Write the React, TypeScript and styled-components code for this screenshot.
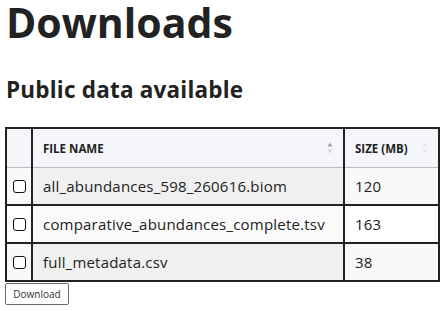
import React from 'react';
import styled, { createGlobalStyle } from 'styled-components';

const GlobalStyle = createGlobalStyle`
  body {
    margin: 0;
    background: #fff;
    color: #222;
    font-family: "Open Sans", "DejaVu Sans", sans-serif;
  }
`;

const Page = styled.div`
  padding: 0 4px 0 5px;
`;

const Title = styled.h1`
  margin: 0;
  padding-left: 1px;
  font-size: 41px;
  line-height: 44px;
  font-weight: 700;
  color: #222;
`;

const SubTitle = styled.h2`
  margin: 32px 0 23px 0;
  padding-left: 1px;
  font-size: 22.5px;
  line-height: 28px;
  font-weight: 700;
  letter-spacing: 0.2px;
  color: #222;
`;

const Table = styled.table`
  width: 100%;
  border-collapse: collapse;
  border: 2px solid #222;
  margin-bottom: 1px;
`;

const Th = styled.th<{ w?: number }>`
  height: 38px;
  padding: 0 10px;
  width: ${p => (p.w ? `${p.w}px` : 'auto')};
  background: #f5f6fa;
  border-left: 2px solid #222;
  border-right: 2px solid #222;
  border-bottom: 1px solid #bdbdbd;
  text-align: left;
  font-size: 11.5px;
  font-weight: 700;
  color: #222;
`;

const CheckHead = styled(Th)`
  padding: 0;
`;

const HeadInner = styled.div`
  display: flex;
  align-items: center;
  justify-content: space-between;
`;

const Row = styled.tr<{ odd: boolean }>`
  background: ${p => (p.odd ? '#f9f9f9' : '#ffffff')};
`;

const Td = styled.td<{ sorted?: boolean; odd?: boolean; first?: boolean }>`
  height: 36px;
  padding: 0 10px;
  border-left: 2px solid #222;
  border-right: 2px solid #222;
  border-top: ${p => (p.first ? 'none' : '2px solid #222')};
  font-size: 15px;
  letter-spacing: 0.2px;
  color: #222;
  background: ${p => (p.sorted ? (p.odd ? '#f0f0f0' : '#fafafa') : 'transparent')};
`;

const CheckCell = styled(Td)`
  padding: 0;
  text-align: center;
`;

const Check = styled.input`
  appearance: none;
  display: block;
  margin: 0 auto;
  width: 13px;
  height: 13px;
  border: 1.5px solid #111;
  border-radius: 3px;
  background: #fff;
`;

const Button = styled.button`
  display: block;
  width: 64px;
  height: 22px;
  padding: 0;
  background: #fff;
  border: 1px solid #6b6b6b;
  border-radius: 2px;
  font-family: "Open Sans", "DejaVu Sans", sans-serif;
  font-size: 10px;
  color: #333;
`;

function SortIcon ({ active }: { active?: boolean }) :React.ReactElement {
  return (
    <svg width="6" height="12" viewBox="0 0 6 12">
      <path d="M3 0.5L5.5 4.5H0.5Z" fill={active ? '#a5a5a5' : '#e2e2e2'} />
      <path d="M3 11.5L5.5 7.5H0.5Z" fill={active ? '#d6d6d6' : '#e8e8e8'} />
    </svg>
  );
}

const files = [
  { name: 'all_abundances_598_260616.biom', size: 120 },
  { name: 'comparative_abundances_complete.tsv', size: 163 },
  { name: 'full_metadata.csv', size: 38 },
];

export default function App () :React.ReactElement {
  return (
    <Page>
      <GlobalStyle />
      <Title>Downloads</Title>
      <SubTitle>Public data available</SubTitle>
      <Table>
        <thead>
          <tr>
            <CheckHead w={24} />
            <Th>
              <HeadInner>FILE NAME <SortIcon active /></HeadInner>
            </Th>
            <Th w={73}>
              <HeadInner>SIZE (MB) <SortIcon /></HeadInner>
            </Th>
          </tr>
        </thead>
        <tbody>
          {files.map((f, i) => {
            const odd = i % 2 === 0;
            const first = i === 0;
            return (
              <Row key={f.name} odd={odd}>
                <CheckCell first={first}><Check type="checkbox" /></CheckCell>
                <Td first={first} sorted odd={odd}>{f.name}</Td>
                <Td first={first}>{f.size}</Td>
              </Row>
            );
          })}
        </tbody>
      </Table>
      <Button>Download</Button>
    </Page>
  );
}
